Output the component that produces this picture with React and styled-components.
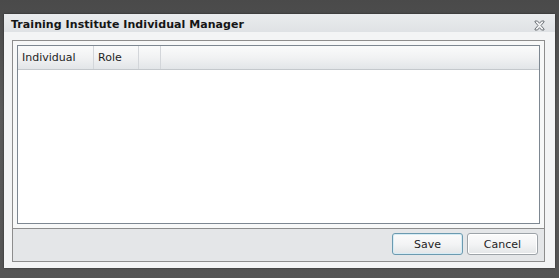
import React from "react";
import styled, { createGlobalStyle } from "styled-components";

const Global = createGlobalStyle`
  html, body { margin: 0; padding: 0; }
  body {
    background: linear-gradient(#4a4a4a, #5a5a5a 40%, #555 100%);
    width: 559px;
    height: 278px;
    overflow: hidden;
    font-family: "DejaVu Sans", Tahoma, sans-serif;
  }
`;

const Frame = styled.div`
  padding: 14px 4px 10px 4px;
  height: 278px;
  box-sizing: border-box;
`;

const Window = styled.div`
  height: 254px;
  background: #f3f4f5;
  display: flex;
  flex-direction: column;
  box-shadow: 0 0 2px rgba(0, 0, 0, 0.5);
`;

const TitleBar = styled.div`
  height: 18px;
  flex: none;
  display: flex;
  align-items: center;
  justify-content: space-between;
  padding: 0 10px 0 7px;
  background: linear-gradient(#eaecee, #dfe2e5);
`;

const Title = styled.span`
  font-family: "DejaVu Sans", Tahoma, sans-serif;
  font-weight: bold;
  font-size: 11px;
  color: #151515;
  letter-spacing: 0.06px;
  padding-top: 3px;
`;

const CloseButton = styled.span`
  display: flex;
  width: 11px;
  height: 11px;
  margin-top: 4px;
`;

const Body = styled.div`
  flex: 1;
  padding: 8px 10px 6px 8px;
  display: flex;
`;

const Outer = styled.div`
  flex: 1;
  border: 1px solid #8d8d8d;
  display: flex;
  flex-direction: column;
`;

const GridArea = styled.div`
  flex: 1;
  padding: 4px;
  background: #f7f8f8;
  border-bottom: 1px solid #8d8d8d;
  display: flex;
`;

const Grid = styled.div`
  flex: 1;
  border: 1px solid #7d8791;
  background: #fff;
  display: flex;
  flex-direction: column;
`;

const HeaderRow = styled.div`
  height: 23px;
  display: flex;
  background: linear-gradient(#fafbfb, #f1f2f3 50%, #e2e5e8);
  border-bottom: 1px solid #c4c8cc;
`;

const HeaderCell = styled.div`
  width: ${(p) => p.$w}px;
  flex: ${(p) => (p.$grow ? 1 : "none")};
  box-sizing: border-box;
  border-right: ${(p) => (p.$grow ? "none" : "1px solid #d3d6da")};
  padding-left: 4px;
  display: flex;
  align-items: center;
  font-size: 11px;
  color: #1e1e1e;
`;

const Footer = styled.div`
  height: 32px;
  flex: none;
  background: #e4e6e8;
  display: flex;
  justify-content: flex-end;
  align-items: flex-start;
  gap: 4px;
  padding: 4px 6px 0 0;
  box-sizing: border-box;
`;

const Button = styled.button`
  width: 71px;
  height: 22px;
  box-sizing: border-box;
  border-radius: 3px;
  border: 1px solid ${(p) => (p.$primary ? "#6b9ab0" : "#9da3a8")};
  box-shadow: inset 0 0 0 1px ${(p) => (p.$primary ? "#d6ecf5" : "#ffffff")};
  background: linear-gradient(#fbfbfb, #f3f4f5 50%, #e3e5e7);
  font-family: "DejaVu Sans", Tahoma, sans-serif;
  font-size: 11px;
  color: #1e1e1e;
  padding: 0;
  cursor: pointer;
`;

const CloseIcon = () => (
  <svg width="11" height="11" viewBox="0 0 11 11">
    <path
      d="M1 1 L3.5 1 L5.5 3.3 L7.5 1 L10 1 L10 2 L7 5.5 L10 9 L10 10 L7.5 10 L5.5 7.7 L3.5 10 L1 10 L1 9 L4 5.5 L1 2 Z"
      fill="#f2f3f4"
      stroke="#6f7479"
      strokeWidth="1"
      strokeLinejoin="round"
    />
  </svg>
);

export default function App() {
  return (
    <>
      <Global />
      <Frame>
        <Window>
          <TitleBar>
            <Title>Training Institute Individual Manager</Title>
            <CloseButton>
              <CloseIcon />
            </CloseButton>
          </TitleBar>
          <Body>
            <Outer>
              <GridArea>
                <Grid>
                  <HeaderRow>
                    <HeaderCell $w={76}>Individual</HeaderCell>
                    <HeaderCell $w={45}>Role</HeaderCell>
                    <HeaderCell $w={22} />
                    <HeaderCell $grow />
                  </HeaderRow>
                </Grid>
              </GridArea>
              <Footer>
                <Button $primary>Save</Button>
                <Button>Cancel</Button>
              </Footer>
            </Outer>
          </Body>
        </Window>
      </Frame>
    </>
  );
}
